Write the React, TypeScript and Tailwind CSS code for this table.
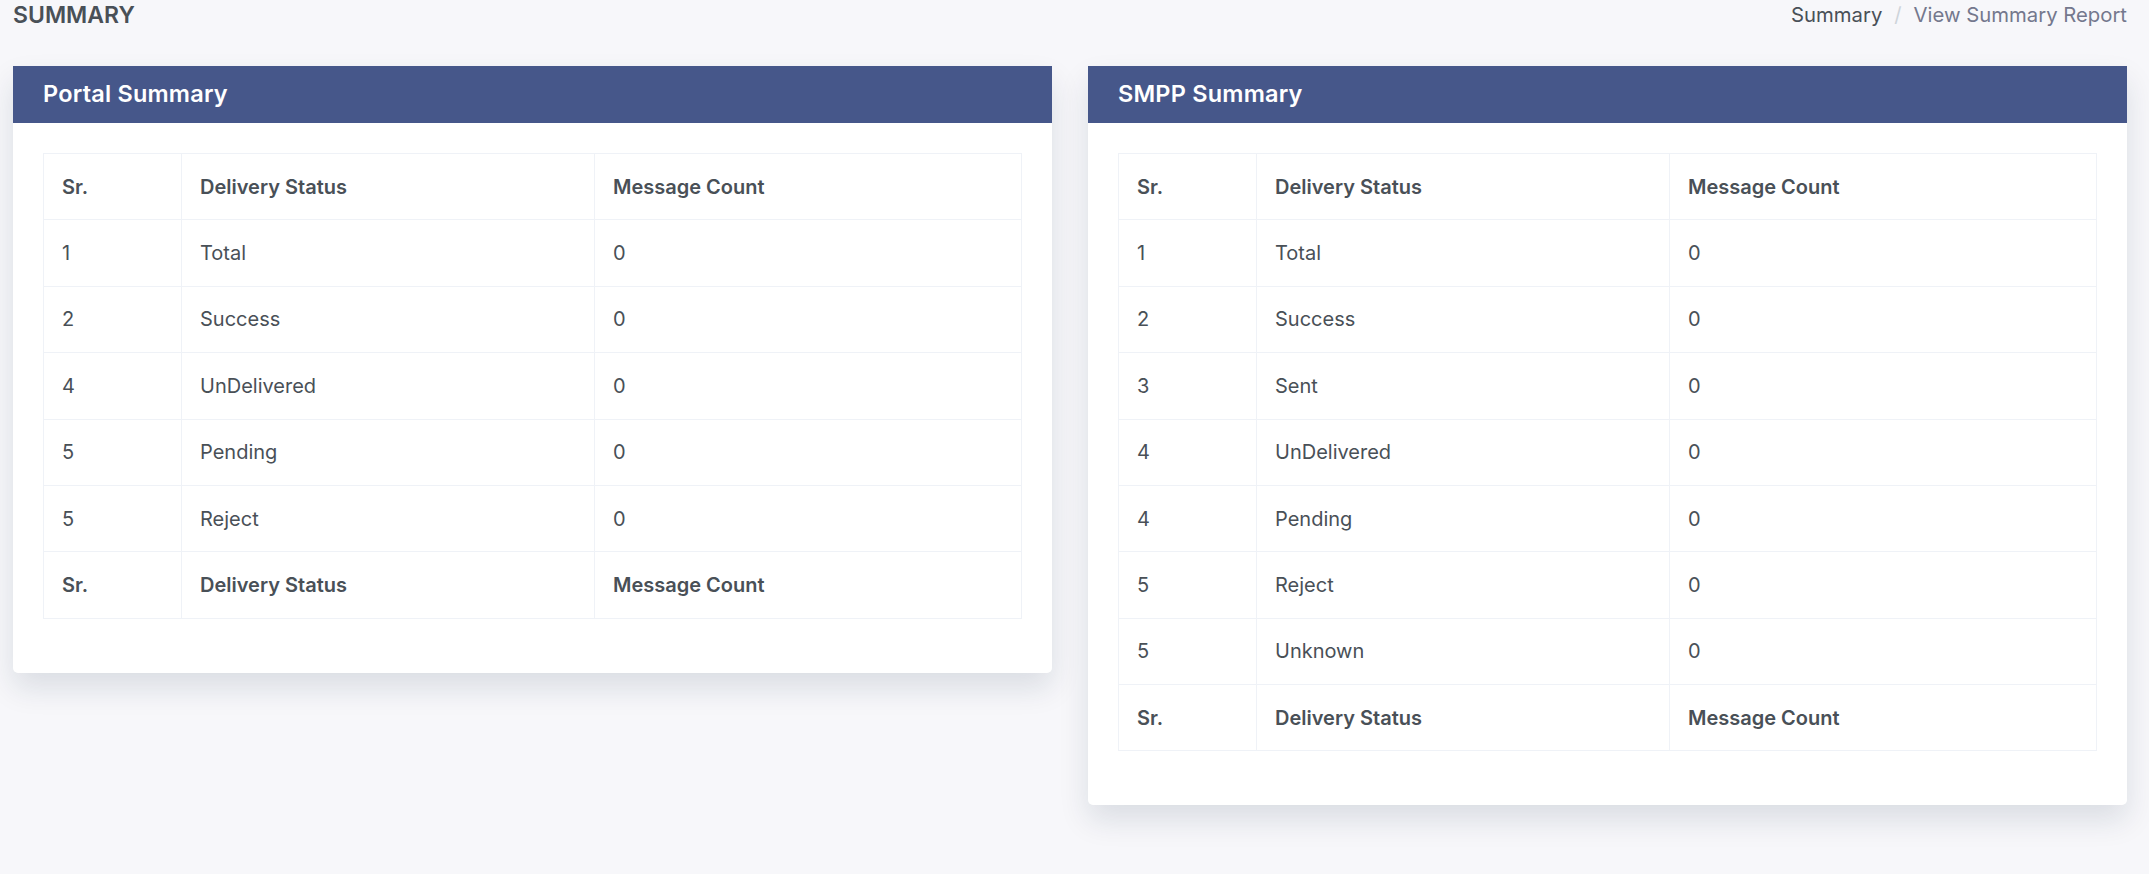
import React from "react";

type Row = { sr: string; status: string; count: string };

const portalRows: Row[] = [
  { sr: "1", status: "Total", count: "0" },
  { sr: "2", status: "Success", count: "0" },
  { sr: "4", status: "UnDelivered", count: "0" },
  { sr: "5", status: "Pending", count: "0" },
  { sr: "5", status: "Reject", count: "0" },
];

const smppRows: Row[] = [
  { sr: "1", status: "Total", count: "0" },
  { sr: "2", status: "Success", count: "0" },
  { sr: "3", status: "Sent", count: "0" },
  { sr: "4", status: "UnDelivered", count: "0" },
  { sr: "4", status: "Pending", count: "0" },
  { sr: "5", status: "Reject", count: "0" },
  { sr: "5", status: "Unknown", count: "0" },
];

function HeadRow() {
  return (
    <tr>
      <th className="border border-[#eff2f7] px-[18px] py-[17.7px] text-left font-semibold">Sr.</th>
      <th className="border border-[#eff2f7] px-[18px] py-[17.7px] text-left font-semibold">Delivery Status</th>
      <th className="border border-[#eff2f7] px-[18px] py-[17.7px] text-left font-semibold">Message Count</th>
    </tr>
  );
}

function SummaryCard({ title, rows }: { title: string; rows: Row[] }) {
  return (
    <div className="bg-white rounded-b-[5px] shadow-[0_15px_30px_rgba(18,38,63,0.12)]">
      <div className="h-[57px] bg-[#46578a] px-[30px] flex items-center">
        <h4 className="text-white font-semibold text-[23.5px] leading-[30px] tracking-[0.2px] mt-[-1px]">{title}</h4>
      </div>
      <div className="px-[30px] pt-[30px] pb-[54px]">
        <table className="w-full table-fixed border-collapse text-[20px] leading-[30px] text-[#495057]">
          <colgroup>
            <col className="w-[138px]" />
            <col className="w-[413px]" />
            <col />
          </colgroup>
          <thead>
            <HeadRow />
          </thead>
          <tbody>
            {rows.map((r, i) => (
              <tr key={i}>
                <td className="border border-[#eff2f7] px-[18px] py-[17.7px]">{r.sr}</td>
                <td className="border border-[#eff2f7] px-[18px] py-[17.7px]">{r.status}</td>
                <td className="border border-[#eff2f7] px-[18px] py-[17.7px]">{r.count}</td>
              </tr>
            ))}
          </tbody>
          <tfoot>
            <HeadRow />
          </tfoot>
        </table>
      </div>
    </div>
  );
}

export default function App() {
  return (
    <div
      className="min-h-[874px] bg-[#f7f7fa] pl-[13px] pr-[22px]"
      style={{ fontFamily: "Inter, 'Open Sans', sans-serif" }}
    >
      <div className="flex items-start justify-between h-[30px]">
        <h4 className="text-[23px] leading-[30px] font-semibold text-[#495057] uppercase">Summary</h4>
        <div className="flex items-center text-[20.3px] leading-[30px]">
          <span className="text-[#495057]">Summary</span>
          <span className="px-[12px] text-[#ced4da]">/</span>
          <span className="text-[#74788d]">View Summary Report</span>
        </div>
      </div>
      <div className="mt-[36px] grid grid-cols-2 gap-[36px] items-start">
        <SummaryCard title="Portal Summary" rows={portalRows} />
        <SummaryCard title="SMPP Summary" rows={smppRows} />
      </div>
    </div>
  );
}
